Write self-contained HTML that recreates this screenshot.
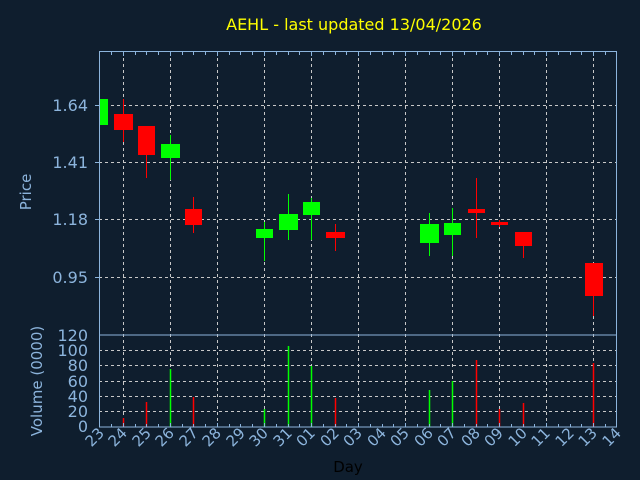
<!DOCTYPE html>
<html><head><style>
html,body{margin:0;padding:0;background:#0f1e2e;width:640px;height:480px;overflow:hidden}
text{font-family:"DejaVu Sans","Liberation Sans",sans-serif}
</style></head><body>
<svg width="640" height="480" viewBox="0 0 640 480" xmlns="http://www.w3.org/2000/svg">
<rect width="640" height="480" fill="#0f1e2e"/>
<text x="354" y="30" fill="#ffff00" font-size="16" text-anchor="middle">AEHL - last updated 13/04/2026</text>
<g stroke="#c8c8c8" stroke-dasharray="3,3" stroke-width="1">
<line x1="99" y1="105.5" x2="616" y2="105.5"/>
<line x1="99" y1="162.5" x2="616" y2="162.5"/>
<line x1="99" y1="219.5" x2="616" y2="219.5"/>
<line x1="99" y1="277.5" x2="616" y2="277.5"/>
<line x1="99" y1="350.5" x2="616" y2="350.5"/>
<line x1="99" y1="365.5" x2="616" y2="365.5"/>
<line x1="99" y1="381.5" x2="616" y2="381.5"/>
<line x1="99" y1="396.5" x2="616" y2="396.5"/>
<line x1="99" y1="411.5" x2="616" y2="411.5"/>
<g id="vg">
<line x1="123.5" y1="52" x2="123.5" y2="427"/><line x1="170.5" y1="52" x2="170.5" y2="427"/>
<line x1="217.5" y1="52" x2="217.5" y2="427"/><line x1="264.5" y1="52" x2="264.5" y2="427"/>
<line x1="311.5" y1="52" x2="311.5" y2="427"/><line x1="358.5" y1="52" x2="358.5" y2="427"/>
<line x1="405.5" y1="52" x2="405.5" y2="427"/><line x1="452.5" y1="52" x2="452.5" y2="427"/>
<line x1="499.5" y1="52" x2="499.5" y2="427"/><line x1="546.5" y1="52" x2="546.5" y2="427"/>
<line x1="593.5" y1="52" x2="593.5" y2="427"/>
</g>
</g>
<!-- candles -->
<g>
<rect x="99.5" y="99" width="8.5" height="26" fill="#00ff00"/>
<line x1="123.5" y1="99" x2="123.5" y2="142" stroke="#ff0000"/><rect x="114" y="114" width="19" height="16" fill="#ff0000"/>
<line x1="146.5" y1="126" x2="146.5" y2="178" stroke="#ff0000"/><rect x="138" y="126" width="17" height="29" fill="#ff0000"/>
<line x1="170.5" y1="135" x2="170.5" y2="180" stroke="#00ff00"/><rect x="161" y="144" width="19" height="14" fill="#00ff00"/>
<line x1="193.5" y1="197" x2="193.5" y2="233" stroke="#ff0000"/><rect x="185" y="209" width="17" height="16" fill="#ff0000"/>
<line x1="264.5" y1="222" x2="264.5" y2="261" stroke="#00ff00"/><rect x="256" y="229" width="17" height="9" fill="#00ff00"/>
<line x1="288.5" y1="194" x2="288.5" y2="240" stroke="#00ff00"/><rect x="279" y="214" width="19" height="16" fill="#00ff00"/>
<line x1="311.5" y1="198" x2="311.5" y2="240" stroke="#00ff00"/><rect x="303" y="202" width="17" height="13" fill="#00ff00"/>
<line x1="335.5" y1="224" x2="335.5" y2="251" stroke="#ff0000"/><rect x="326" y="232" width="19" height="6" fill="#ff0000"/>
<line x1="429.5" y1="213" x2="429.5" y2="256" stroke="#00ff00"/><rect x="420" y="224" width="19" height="19" fill="#00ff00"/>
<line x1="452.5" y1="208" x2="452.5" y2="256" stroke="#00ff00"/><rect x="444" y="223" width="17" height="12" fill="#00ff00"/>
<line x1="476.5" y1="178" x2="476.5" y2="238" stroke="#ff0000"/><rect x="468" y="209" width="17" height="4" fill="#ff0000"/>
<line x1="499.5" y1="220" x2="499.5" y2="227" stroke="#ff0000"/><rect x="491" y="222" width="17" height="3" fill="#ff0000"/>
<line x1="523.5" y1="232" x2="523.5" y2="258" stroke="#ff0000"/><rect x="515" y="232" width="17" height="14" fill="#ff0000"/>
<line x1="593.5" y1="263" x2="593.5" y2="316" stroke="#ff0000"/><rect x="585" y="263" width="18" height="33" fill="#ff0000"/>
</g>
<!-- volume -->
<g stroke-width="1.5">
<line x1="123.5" y1="418" x2="123.5" y2="427" stroke="#ff0000"/>
<line x1="146.5" y1="402" x2="146.5" y2="427" stroke="#ff0000"/>
<line x1="170.5" y1="369" x2="170.5" y2="427" stroke="#00ff00"/>
<line x1="193.5" y1="397" x2="193.5" y2="427" stroke="#ff0000"/>
<line x1="264.5" y1="409" x2="264.5" y2="427" stroke="#00ff00"/>
<line x1="288.5" y1="346" x2="288.5" y2="427" stroke="#00ff00"/>
<line x1="311.5" y1="366" x2="311.5" y2="427" stroke="#00ff00"/>
<line x1="335.5" y1="398" x2="335.5" y2="427" stroke="#ff0000"/>
<line x1="429.5" y1="390" x2="429.5" y2="427" stroke="#00ff00"/>
<line x1="452.5" y1="381" x2="452.5" y2="427" stroke="#00ff00"/>
<line x1="476.5" y1="360" x2="476.5" y2="427" stroke="#ff0000"/>
<line x1="499.5" y1="409" x2="499.5" y2="427" stroke="#ff0000"/>
<line x1="523.5" y1="403" x2="523.5" y2="427" stroke="#ff0000"/>
<line x1="593.5" y1="363" x2="593.5" y2="427" stroke="#ff0000"/>
</g>
<!-- frames -->
<g stroke="#8cb4dc" fill="none" stroke-width="1">
<rect x="99.5" y="51.5" width="517" height="283.5"/>
<rect x="99.5" y="335" width="517" height="92"/>
<line x1="95" y1="105.5" x2="99" y2="105.5"/><line x1="95" y1="162.5" x2="99" y2="162.5"/>
<line x1="95" y1="219.5" x2="99" y2="219.5"/><line x1="95" y1="277.5" x2="99" y2="277.5"/>
</g>
<g stroke="#8cb4dc" stroke-width="1" id="ticks"></g>
<g fill="#8cb4dc" font-size="16" text-anchor="end">
<text x="88" y="111">1.64</text><text x="88" y="168">1.41</text><text x="88" y="225">1.18</text><text x="88" y="283">0.95</text>
<text x="88" y="341">120</text><text x="88" y="356">100</text><text x="88" y="371">80</text><text x="88" y="387">60</text><text x="88" y="402">40</text><text x="88" y="417">20</text><text x="88" y="432">0</text>
</g>
<text transform="translate(31,192) rotate(-90)" fill="#8cb4dc" font-size="15" text-anchor="middle">Price</text>
<text transform="translate(42,381) rotate(-90)" fill="#8cb4dc" font-size="15" text-anchor="middle">Volume (0000)</text>
<text x="348" y="472" fill="#000" font-size="15" text-anchor="middle">Day</text>
<g fill="#8cb4dc" font-size="15" text-anchor="end">
<text transform="translate(105,434) rotate(-45)">23</text>
<text transform="translate(128,434) rotate(-45)">24</text>
<text transform="translate(152,434) rotate(-45)">25</text>
<text transform="translate(175,434) rotate(-45)">26</text>
<text transform="translate(199,434) rotate(-45)">27</text>
<text transform="translate(222,434) rotate(-45)">28</text>
<text transform="translate(246,434) rotate(-45)">29</text>
<text transform="translate(269,434) rotate(-45)">30</text>
<text transform="translate(293,434) rotate(-45)">31</text>
<text transform="translate(316,434) rotate(-45)">01</text>
<text transform="translate(340,434) rotate(-45)">02</text>
<text transform="translate(363,434) rotate(-45)">03</text>
<text transform="translate(387,434) rotate(-45)">04</text>
<text transform="translate(410,434) rotate(-45)">05</text>
<text transform="translate(434,434) rotate(-45)">06</text>
<text transform="translate(457,434) rotate(-45)">07</text>
<text transform="translate(481,434) rotate(-45)">08</text>
<text transform="translate(504,434) rotate(-45)">09</text>
<text transform="translate(528,434) rotate(-45)">10</text>
<text transform="translate(551,434) rotate(-45)">11</text>
<text transform="translate(575,434) rotate(-45)">12</text>
<text transform="translate(598,434) rotate(-45)">13</text>
<text transform="translate(622,434) rotate(-45)">14</text>
</g>
<g stroke="#8cb4dc" stroke-width="1">
<path d="M111.5 52v3M123.5 52v4M135.5 52v3M146.5 52v3M158.5 52v3M170.5 52v4M182.5 52v3M193.5 52v3M205.5 52v3M217.5 52v4M229.5 52v3M240.5 52v3M252.5 52v3M264.5 52v4M276.5 52v3M288.5 52v3M299.5 52v3M311.5 52v4M323.5 52v3M335.5 52v3M346.5 52v3M358.5 52v4M370.5 52v3M382.5 52v3M393.5 52v3M405.5 52v4M417.5 52v3M429.5 52v3M440.5 52v3M452.5 52v4M464.5 52v3M476.5 52v3M487.5 52v3M499.5 52v4M511.5 52v3M523.5 52v3M534.5 52v3M546.5 52v4M558.5 52v3M570.5 52v3M581.5 52v3M593.5 52v4M605.5 52v3"/>
<path d="M111.5 427v-3M123.5 427v-4M135.5 427v-3M146.5 427v-3M158.5 427v-3M170.5 427v-4M182.5 427v-3M193.5 427v-3M205.5 427v-3M217.5 427v-4M229.5 427v-3M240.5 427v-3M252.5 427v-3M264.5 427v-4M276.5 427v-3M288.5 427v-3M299.5 427v-3M311.5 427v-4M323.5 427v-3M335.5 427v-3M346.5 427v-3M358.5 427v-4M370.5 427v-3M382.5 427v-3M393.5 427v-3M405.5 427v-4M417.5 427v-3M429.5 427v-3M440.5 427v-3M452.5 427v-4M464.5 427v-3M476.5 427v-3M487.5 427v-3M499.5 427v-4M511.5 427v-3M523.5 427v-3M534.5 427v-3M546.5 427v-4M558.5 427v-3M570.5 427v-3M581.5 427v-3M593.5 427v-4M605.5 427v-3"/>
</g>
</svg>
</body></html>
